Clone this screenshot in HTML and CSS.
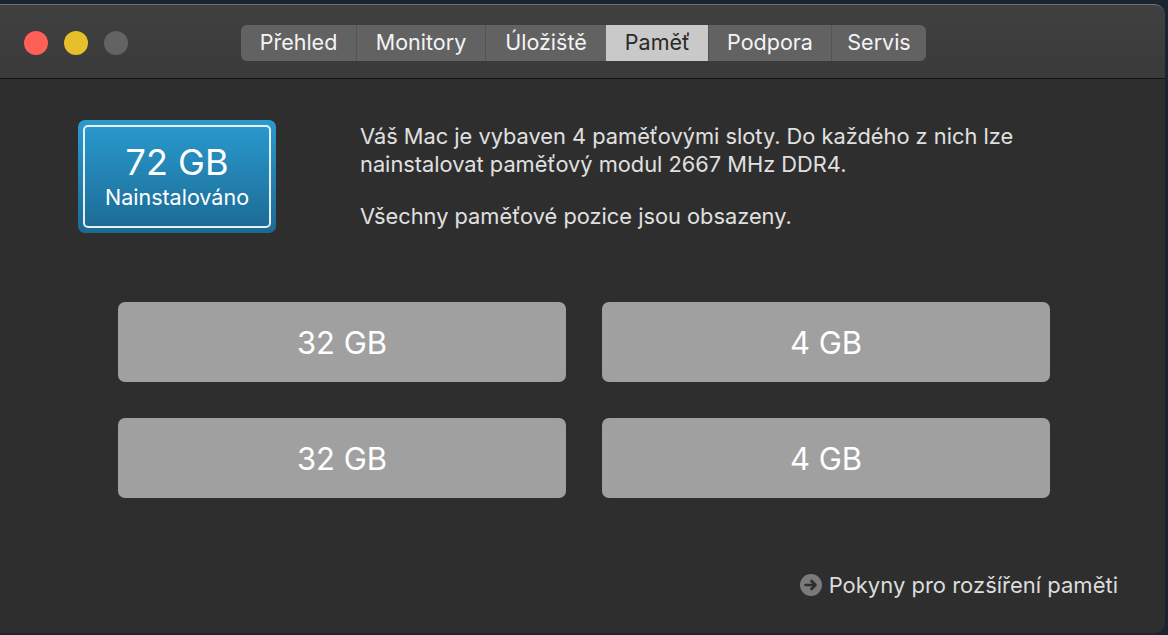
FILE: index.html
```html
<!DOCTYPE html>
<html lang="cs">
<head>
<meta charset="utf-8">
<title>Paměť</title>
<link rel="stylesheet" href="styles.css">
</head>
<body>
<div class="window">
  <div class="titlebar">
    <div class="lights">
      <span class="light red"></span>
      <span class="light yellow"></span>
      <span class="light gray"></span>
    </div>
    <div class="tabs">
      <span class="tab t1">Přehled</span>
      <span class="tab t2">Monitory</span>
      <span class="tab t3">Úložiště</span>
      <span class="tab t4 active">Paměť</span>
      <span class="tab t5">Podpora</span>
      <span class="tab t6">Servis</span>
    </div>
  </div>
  <div class="content">
    <div class="top">
      <div class="badge">
        <div class="badge-inner">
          <div class="badge-size">72 GB</div>
          <div class="badge-label">Nainstalováno</div>
        </div>
      </div>
      <div class="desc">
        <p>Váš Mac je vybaven 4 paměťovými sloty. Do každého z nich lze<br>nainstalovat paměťový modul 2667 MHz DDR4.</p>
        <p>Všechny paměťové pozice jsou obsazeny.</p>
      </div>
    </div>
    <div class="slots">
      <div class="slot">32 GB</div>
      <div class="slot">4 GB</div>
      <div class="slot">32 GB</div>
      <div class="slot">4 GB</div>
    </div>
    <div class="footer">
      <a class="link" href="#">
        <svg class="arrow" width="22" height="22" viewBox="0 0 22 22" aria-hidden="true">
          <circle cx="11" cy="11" r="11" fill="#7a7a7a"/>
          <path d="M5.5 11H15M11.5 7L15.5 11L11.5 15" fill="none" stroke="#2e2e2e" stroke-width="2.6" stroke-linecap="round" stroke-linejoin="round"/>
        </svg>
        <span>Pokyny pro rozšíření paměti</span>
      </a>
    </div>
  </div>
</div>
</body>
</html>
```
FILE: styles.css
```css
html, body {
  margin: 0;
  padding: 0;
  height: 100%;
}
body {
  background: #1c2331;
  font-family: Inter, "Noto Sans", "Liberation Sans", sans-serif;
  overflow: hidden;
}
.window {
  margin: 4px 3px 0 0;
  height: 629px;
  display: flex;
  flex-direction: column;
  background: #2e2e2e;
  border-radius: 0 10px 10px 0;
  overflow: hidden;
}
.titlebar {
  border-top: 1px solid #707070;
  border-bottom: 1px solid #121212;
  border-radius: 0 10px 0 0;
  background: linear-gradient(#404040, #3a3a3a);
  display: flex;
  align-items: center;
  box-sizing: border-box;
  height: 75px;
  flex: none;
}
.lights {
  display: flex;
  gap: 16px;
  padding-left: 24px;
  margin-top: 2px;
}
.light {
  width: 24px;
  height: 24px;
  border-radius: 50%;
}
.red { background: #fe5f57; }
.yellow { background: #e6c02b; }
.gray { background: #636363; }
.tabs {
  display: flex;
  margin-left: 113px;
  margin-top: 2px;
  height: 36px;
  border-radius: 6px;
  overflow: hidden;
  background: #626262;
}
.tab {
  display: flex;
  align-items: center;
  justify-content: center;
  color: #f4f4f4;
  font-size: 21.5px;
  padding-bottom: 2px;
  border-left: 1px solid #545454;
  box-sizing: border-box;
}
.tab:first-child { border-left: none; }
.t1 { width: 115px; }
.t2 { width: 129px; }
.t3 { width: 121px; }
.t4 { width: 102px; }
.t5 { width: 123px; }
.t6 { width: 95px; }
.tab.active {
  background: #c9c9c9;
  color: #2a2a2a;
  border-left-color: #c9c9c9;
}
.content {
  flex: 1;
  display: flex;
  flex-direction: column;
}
.top {
  display: flex;
  align-items: flex-start;
  padding: 41px 0 0 78px;
}
.badge {
  width: 198px;
  height: 113px;
  box-sizing: border-box;
  padding: 5px;
  border-radius: 7px;
  background: linear-gradient(#2a9bd0, #1c6993);
  flex: none;
}
.badge-inner {
  height: 100%;
  box-sizing: border-box;
  border: 2px solid #e8eef2;
  border-radius: 5px;
  display: flex;
  flex-direction: column;
  align-items: center;
  justify-content: center;
  color: #fff;
}
.badge-size {
  font-size: 36px;
  line-height: 40px;
  margin-top: 0;
}
.badge-label {
  font-size: 21.5px;
  line-height: 28px;
  margin-top: 1px;
}
.desc {
  margin-left: 84px;
  margin-top: 2px;
  color: #e0e0e0;
  font-size: 21.8px;
  line-height: 28px;
  white-space: nowrap;
}
.desc p {
  margin: 0 0 24px;
}
.desc p:last-child { margin-bottom: 0; }
.slots {
  display: grid;
  grid-template-columns: 448px 448px;
  grid-auto-rows: 80px;
  gap: 36px;
  margin: 69px 0 0 118px;
}
.slot {
  background: #a0a0a0;
  border-radius: 7px;
  display: flex;
  align-items: center;
  justify-content: center;
  color: #fff;
  font-size: 31px;
}
.footer {
  display: flex;
  justify-content: flex-end;
  padding: 74px 47px 0 0;
}
.link {
  display: flex;
  align-items: center;
  gap: 7px;
  color: #dcdcdc;
  text-decoration: none;
  font-size: 22px;
}
.arrow { display: block; }
```
